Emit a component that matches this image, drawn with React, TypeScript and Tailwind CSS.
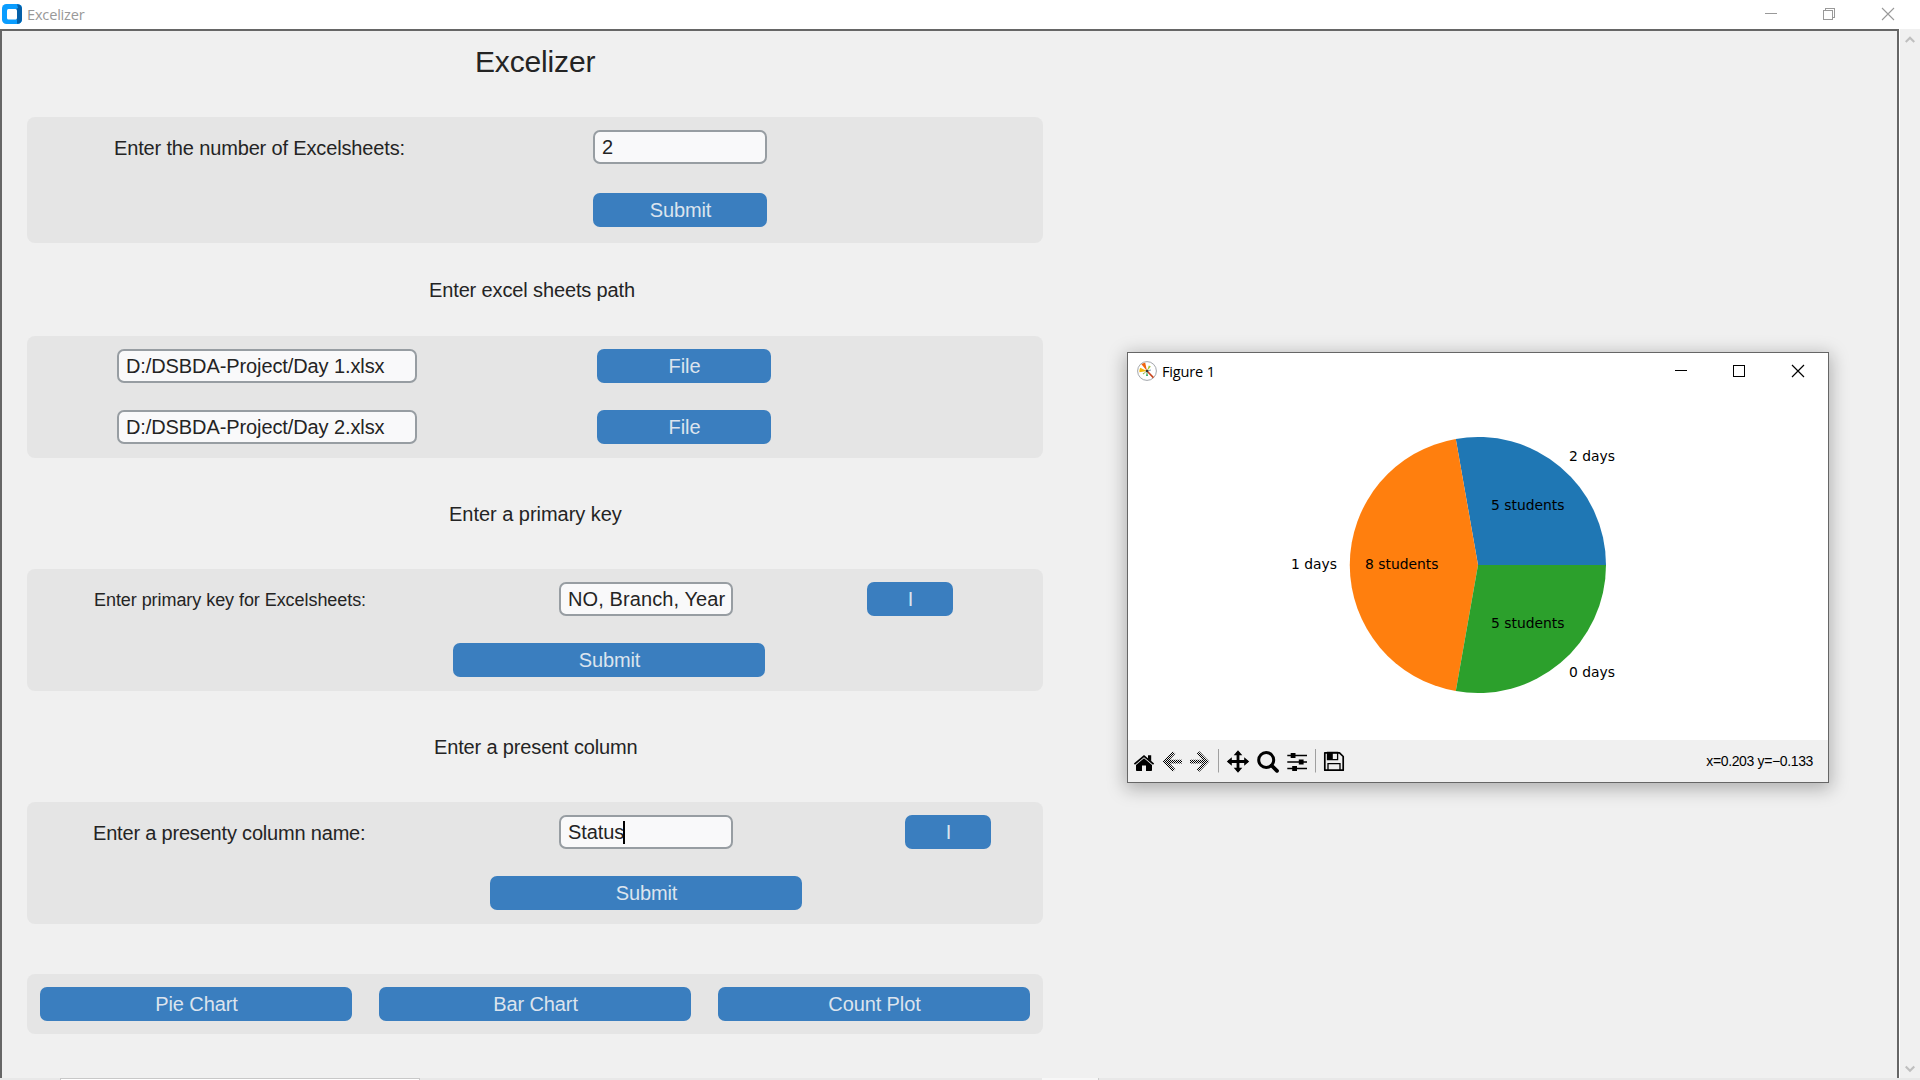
import React from "react";

const px = (n: number) => ({ width: n });

function Button({ children, w }: { children: React.ReactNode; w: number }) {
  return (
    <button
      style={px(w)}
      className="h-[34px] shrink-0 rounded-[7px] bg-[#3a7ebf] pl-px text-center text-[20px] leading-[34px] tracking-[-0.1px] text-[#dce4ee]"
    >
      {children}
    </button>
  );
}

function Entry({ children, w, caret, spacing = "tracking-[-0.1px]" }: { children: React.ReactNode; w: number; caret?: boolean; spacing?: string }) {
  return (
    <div
      style={px(w)}
      className={`flex h-[34px] shrink-0 items-center overflow-hidden whitespace-pre rounded-[7px] border-2 border-[#979da2] bg-[#f9f9fa] pl-[7px] text-[20px] leading-[30px] ${spacing}`}
    >
      {children}
      {caret && <span className="-ml-px h-[23px] w-[2px] bg-black" />}
    </div>
  );
}

function Panel({ className, children }: { className: string; children: React.ReactNode }) {
  return <section className={`ml-[25px] w-[1016px] rounded-[8px] bg-[#e5e5e5] pt-[13px] ${className}`}>{children}</section>;
}

function Pie() {
  return (
    <svg width="700" height="353" viewBox="1128 387 700 353" className="block" fontFamily='"DejaVu Sans", sans-serif' fontSize="13.89">
      <path d="M1478 565 L1606 565 A128 128 0 0 0 1455.8 438.9 Z" fill="#1f77b4" />
      <path d="M1478 565 L1455.8 438.9 A128 128 0 0 0 1455.8 691.1 Z" fill="#ff7f0e" />
      <path d="M1478 565 L1455.8 691.1 A128 128 0 0 0 1606 565 Z" fill="#2ca02c" />
      <text x="1569" y="461">2 days</text>
      <text x="1491" y="510">5 students</text>
      <text x="1291" y="569">1 days</text>
      <text x="1365" y="569">8 students</text>
      <text x="1491" y="628">5 students</text>
      <text x="1569" y="677">0 days</text>
    </svg>
  );
}

function FigureLogo() {
  return (
    <svg width="20" height="20" viewBox="0 0 20 20" className="block">
      <circle cx="10" cy="10" r="9.4" fill="#fff" stroke="#8a8f96" strokeWidth="0.8" />
      <path d="M10 10 L4.4 3.2 A9 9 0 0 1 8.2 1.8 Z" fill="#f0640f" />
      <path d="M10 10 L2.4 11.2 A8 8 0 0 1 3.2 6.8 Z" fill="#f5b80c" />
      <path d="M10 10 L11.8 4.4 L13.9 5.6 Z" fill="#a6c63c" />
      <path d="M10 10 L9 15 L11 15 Z" fill="#35a868" />
      <path d="M10 10 L6.4 13.6 L5.6 12.6 Z" fill="#8fc04a" />
      <path d="M10 10 L16.4 16.6" stroke="#c8451c" strokeWidth="1.6" />
      <path d="M10 10 L14 9" stroke="#5e86a8" strokeWidth="0.8" />
      <circle cx="10" cy="10" r="1.3" fill="#333" />
    </svg>
  );
}

function ToolbarIcons() {
  return (
    <svg width="230" height="42" viewBox="1128 740 230 42" className="block" fill="#000">
      <defs>
        <pattern id="stipple" width="2" height="2" patternUnits="userSpaceOnUse">
          <rect width="1" height="1" fill="#000" />
          <rect x="1" y="1" width="1" height="1" fill="#000" />
        </pattern>
      </defs>
      <path d="M1144 758.3 L1152 765 V770.2 Q1152 771 1151.2 771 H1146 V765.6 H1142 V771 H1136.8 Q1136 771 1136 770.2 V765 Z" />
      <path d="M1134.4 764.2 L1144 756.2 L1153.6 764.2" fill="none" stroke="#000" strokeWidth="1.7" />
      <path d="M1148 755.3 h3.2 v6.2 l-3.2 -2.7 Z" />
      <g fill="none" stroke="url(#stipple)" strokeWidth="3.8">
        <path d="M1174 752.5 L1165.3 761.5 L1174 770.5 M1165.5 761.4 L1182 761.6" />
        <path d="M1198 752.5 L1206.7 761.5 L1198 770.5 M1190 761.6 L1206.5 761.4" />
      </g>
      <path d="M1218.5 749 V772.5 M1315.5 749 V772.5" stroke="#a0a0a0" strokeWidth="1" />
      <path d="M1238 752 V771 M1228.5 761.5 H1247.5" stroke="#000" strokeWidth="2.8" />
      <path d="M1238 750.3 L1242.3 755.3 H1233.7 Z M1238 772.7 L1242.3 767.7 H1233.7 Z M1226.8 761.5 L1231.8 757.2 V765.8 Z M1249.2 761.5 L1244.2 757.2 V765.8 Z" />
      <circle cx="1266.2" cy="760" r="7.5" fill="none" stroke="#000" strokeWidth="3" />
      <path d="M1271.6 765.5 L1277 770.8" stroke="#000" strokeWidth="3.8" strokeLinecap="round" />
      <path d="M1287.3 755.5 H1307 M1287.3 762 H1307 M1287.3 768.5 H1307" stroke="#000" strokeWidth="1.6" />
      <path d="M1290.7 753 h4.8 v5 h-4.8 Z M1298.8 759.5 h4.8 v5 h-4.8 Z M1292.2 766 h4.8 v5 h-4.8 Z" />
      <path d="M1324.8 752.8 H1339.5 L1343.2 756.5 V770.2 H1324.8 Z" fill="none" stroke="#000" strokeWidth="1.7" strokeLinejoin="round" />
      <path d="M1327.5 752.5 H1337.6 V759.6 H1327.5 Z M1328 770 V763.7 H1340 V770" fill="none" stroke="#000" strokeWidth="1.3" />
      <path d="M1328 753 h4.8 v6.3 h-4.8 Z" />
    </svg>
  );
}

function FigureWindow() {
  return (
    <div className="absolute left-[1127px] top-[352px] flex h-[431px] w-[702px] flex-col border border-[#666] bg-white shadow-[0_4px_17px_2px_rgba(0,0,0,0.27)]">
      <header className="flex h-[34px] items-start">
        <div className="ml-[9px] mt-[8px]">
          <FigureLogo />
        </div>
        <span className="ml-[5px] mt-[8px] font-['Open_Sans',sans-serif] text-[14.6px] leading-[20px] tracking-[-0.2px] text-black">
          Figure 1
        </span>
        <svg width="131" height="14" viewBox="1674 364 131 14" className="ml-auto mr-[23px] mt-[11px]" fill="none" stroke="#000" shapeRendering="crispEdges">
          <path d="M1675 370.5 H1687" />
          <rect x="1733.5" y="365.5" width="11" height="11" />
          <path d="M1792 365 L1804 377 M1804 365 L1792 377" shapeRendering="auto" strokeWidth="1.2" />
        </svg>
      </header>
      <Pie />
      <footer className="flex h-[42px] items-center justify-between bg-[#f0f0f0]">
        <ToolbarIcons />
        <span className="mr-[15px] text-[14px] leading-[20px] tracking-[-0.36px] text-black">x=0.203 y=−0.133</span>
      </footer>
    </div>
  );
}

export default function App() {
  return (
    <div className="relative flex h-[1080px] w-[1920px] flex-col overflow-hidden bg-[#f0f0f0] font-['Liberation_Sans',Arial,sans-serif] text-[20px] text-[#242424]">
      <header className="flex h-[29px] shrink-0 items-start bg-white">
        <svg width="17" height="20" viewBox="0 0 20 20" preserveAspectRatio="none" className="ml-[2px] mt-[4px] w-[20px]">
          <rect width="20" height="20" rx="4.5" fill="#0a9dff" />
          <path d="M15 0.3 Q20 0.6 20 5 V15 Q20 19.6 15 19.8 V16 L14 15 V5 L16 4 Z" fill="#0560a8" />
          <rect x="5" y="5" width="10" height="10.5" rx="1.5" fill="#fff" />
        </svg>
        <span className="ml-[5px] mt-[4px] font-['Open_Sans',sans-serif] text-[14.6px] leading-[20px] tracking-[-0.2px] text-[#999]">Excelizer</span>
        <svg width="131" height="14" viewBox="1764 7 131 14" className="ml-auto mr-[25px] mt-[7px]" fill="none" stroke="#999" shapeRendering="crispEdges">
          <path d="M1765 13.5 H1777" />
          <path d="M1823.5 10.5 H1832.5 V19.5 H1823.5 Z M1825.5 10 V8.5 H1834.5 V17.5 H1833" />
          <path d="M1882 8 L1894 20 M1894 8 L1882 20" shapeRendering="auto" strokeWidth="1.1" />
        </svg>
      </header>

      <div className="flex h-[1049px] shrink-0">
        <main className="w-[1899px] border-x-2 border-t-2 border-[#666]">
          <h1 className="ml-[473px] mt-[13px] h-[73px] text-[30px] leading-[36px] tracking-[-0.15px]">Excelizer</h1>

          <Panel className="h-[126px]">
            <div className="flex items-center">
              <span className="relative top-px ml-[87px] w-[479px] tracking-[-0.15px]">Enter the number of Excelsheets:</span>
              <Entry w={174}>2</Entry>
            </div>
            <div className="ml-[566px] mt-[29px] flex">
              <Button w={174}>Submit</Button>
            </div>
          </Panel>

          <h2 className="ml-[427px] flex h-[93px] items-center tracking-[-0.13px]">Enter excel sheets path</h2>

          <Panel className="h-[122px]">
            <div className="ml-[90px] flex gap-[180px]">
              <Entry w={300}>D:/DSBDA-Project/Day 1.xlsx</Entry>
              <Button w={174}>File</Button>
            </div>
            <div className="ml-[90px] mt-[27px] flex gap-[180px]">
              <Entry w={300}>D:/DSBDA-Project/Day 2.xlsx</Entry>
              <Button w={174}>File</Button>
            </div>
          </Panel>

          <h2 className="ml-[447px] flex h-[111px] items-center tracking-[-0.03px]">Enter a primary key</h2>

          <Panel className="h-[122px]">
            <div className="flex items-center">
              <span className="relative top-px ml-[67px] w-[465px] text-[18px] tracking-[-0.06px]">Enter primary key for Excelsheets:</span>
              <Entry w={174} spacing="tracking-[0.1px]">NO, Branch, Year</Entry>
              <div className="ml-[134px] flex">
                <Button w={86}>I</Button>
              </div>
            </div>
            <div className="ml-[426px] mt-[27px] flex">
              <Button w={312}>Submit</Button>
            </div>
          </Panel>

          <h2 className="ml-[432px] flex h-[111px] items-center tracking-[-0.15px]">Enter a present column</h2>

          <Panel className="h-[122px]">
            <div className="flex items-center">
              <span className="relative top-px ml-[66px] w-[466px] tracking-[-0.19px]">Enter a presenty column name:</span>
              <Entry w={174} caret>Status</Entry>
              <div className="ml-[172px] flex">
                <Button w={86}>I</Button>
              </div>
            </div>
            <div className="ml-[463px] mt-[27px] flex">
              <Button w={312}>Submit</Button>
            </div>
          </Panel>

          <Panel className="mt-[50px] h-[60px]">
            <div className="ml-[13px] flex gap-[27px]">
              <Button w={312}>Pie Chart</Button>
              <Button w={312}>Bar Chart</Button>
              <Button w={312}>Count Plot</Button>
            </div>
          </Panel>
        </main>

        <aside className="flex w-[21px] flex-col items-center justify-between border-l border-white bg-[#f0f0f0] pb-[5px] pt-[7px]">
          <svg width="10" height="8" viewBox="0 0 10 8" fill="none" stroke="#bfbfbf" strokeWidth="2.2" className="mr-px">
            <path d="M0.7 6 L5 1.7 L9.3 6" />
          </svg>
          <svg width="10" height="8" viewBox="0 0 10 8" fill="none" stroke="#bfbfbf" strokeWidth="2.2" className="mr-px">
            <path d="M0.7 1.5 L5 5.8 L9.3 1.5" />
          </svg>
        </aside>
      </div>

      <div className="flex h-[2px] shrink-0 bg-[#e8e8e8]">
        <div className="ml-[60px] w-[360px] border border-b-0 border-[#c8c8c8] bg-white" />
        <div className="ml-[622px] w-[56px] bg-[#f7f7f7]" />
        <div className="w-px bg-[#ccc]" />
      </div>

      <FigureWindow />
    </div>
  );
}
